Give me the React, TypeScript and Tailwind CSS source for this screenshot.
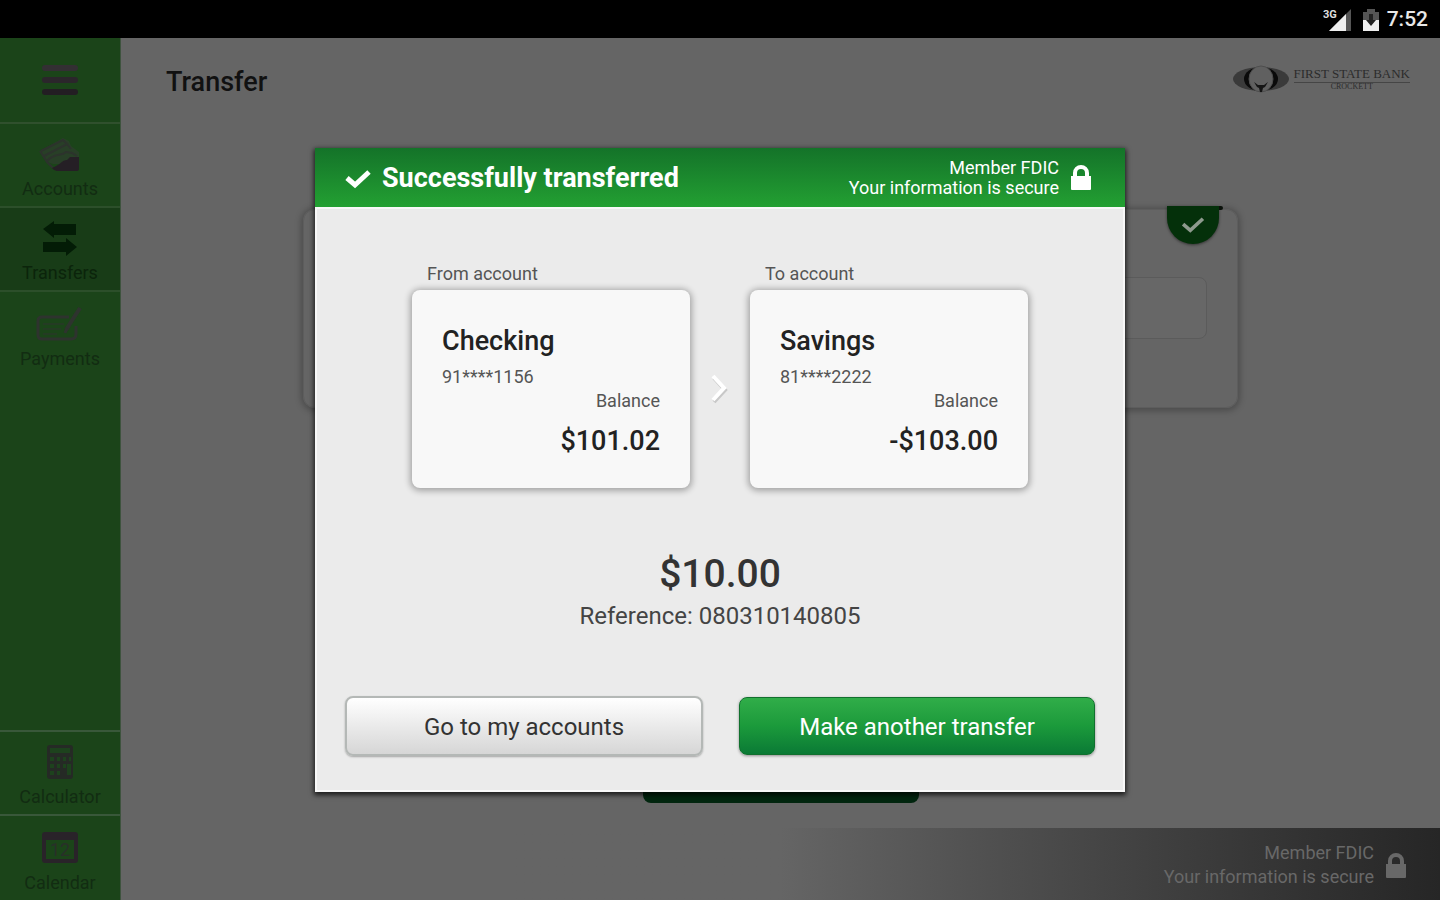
import React from "react";
import clsx from "clsx";

const LockIcon = ({ className }: { className?: string }) => (
  <svg viewBox="0 0 20 25" className={clsx("h-[25px] w-5", className)} fill="currentColor">
    <path d="M0 11h2V8a8 8 0 0 1 16 0v3h2v13a1 1 0 0 1-1 1H1a1 1 0 0 1-1-1zM6 11h8V8a4 4 0 0 0-8 0z" />
  </svg>
);

const AccountsIcon = () => (
  <svg viewBox="0 0 42 36" className="h-9 w-[42px]">
    <path d="M1 15 24 2l6 3 2 5 8 6v12H14Q6 27 1 15z" fill="#283f27" />
    <path d="M2 15 24 4l4 4M5 20l23-12 4 5M8 25c8-9 14-4 19-9l6 1 5 3M1 15l7 11 6 6" fill="none" stroke="#2c332c" strokeWidth="2" />
    <path d="M13 32c8-3 10-8 15-8l3-3h9v12q0 2-2 2H18q-3 0-5-3z" fill="#251f25" />
  </svg>
);

const TransfersIcon = () => (
  <svg viewBox="0 0 36 36" className="h-9 w-9" fill="#031c06">
    <path d="M1 9 12 1v3h22v11H12v3zM35 27 24 18v4H1v10h23v4z" />
  </svg>
);

const PaymentsIcon = () => (
  <svg viewBox="0 0 48 36" className="h-9 w-12" fill="none" stroke="#2e332e">
    <path d="M33 11H6q-4 0-4 4v14q0 4 4 4h29q5 0 5-5v-8" strokeWidth="3" />
    <path d="M7 18h21M7 23h18M7 28h14" strokeWidth="1" />
    <path d="m44 2-9 14-5 8" strokeWidth="4" />
    <path d="m31 22-2 5" strokeWidth="3" />
  </svg>
);

const CalculatorIcon = () => (
  <svg viewBox="0 0 28 36" className="h-9 w-7">
    <path d="M4 1h20q3 0 3 3v28q0 3-3 3H4q-3 0-3-3V4q0-3 3-3z" fill="#252a25" />
    <path d="M4 4h20v5H4zM4 13h4v4H4zM11 13h3v4h-3zM17 13h3v4h-3zM23 13h2v4h-2zM4 20h4v4H4zM11 20h3v4h-3zM17 20h3v4h-3zM4 27h4v4H4zM11 27h3v4h-3zM21 20h4v11h-4z" fill="#1d421d" />
  </svg>
);

const CalendarIcon = () => (
  <svg viewBox="0 0 38 32" className="h-8 w-[38px]">
    <path d="M4 0h30q3 0 3 3v25q0 3-3 3H4q-3 0-3-3V3q0-3 3-3zM5 8v19h28V8z" fill="#292329" fillRule="evenodd" />
    <text x="19" y="24" textAnchor="middle" fontSize="18" fill="#292f29">
      12
    </text>
  </svg>
);

const BankLogo = () => (
  <div className="flex items-center gap-1">
    <svg viewBox="0 0 58 28" className="h-7 w-[58px]">
      <ellipse cx="29" cy="14" rx="28" ry="12" fill="#3a3a3a" />
      <ellipse cx="29" cy="14" rx="17" ry="12" fill="#0a0a0a" />
      <ellipse cx="29" cy="14" rx="12" ry="13" fill="#606060" stroke="#4e4e4e" />
      <path d="m22 17 4 3h6l4-3-3 5-2 1-1 4h-2l-1-4-2-1z" fill="#151515" />
    </svg>
    <div className="flex flex-col items-center font-['Liberation_Serif',serif] text-[#2c2c2c]">
      <span className="border-b border-[#454545] text-[13px] leading-4 whitespace-nowrap">FIRST STATE BANK</span>
      <span className="text-[8px] leading-2">CROCKETT</span>
    </div>
  </div>
);

const topItems = [
  { label: "Accounts", icon: <AccountsIcon /> },
  { label: "Transfers", icon: <TransfersIcon />, active: true },
  { label: "Payments", icon: <PaymentsIcon /> },
];

const bottomItems = [
  { label: "Calculator", icon: <CalculatorIcon /> },
  { label: "Calendar", icon: <CalendarIcon /> },
];

const NavItem = ({ label, icon, active }: { label: string; icon: React.ReactNode; active?: boolean }) => (
  <a
    href="#"
    className={clsx(
      "flex h-[84px] flex-col items-center justify-end gap-[3px] pb-[5px] text-[18px] leading-6",
      active ? "bg-[#183c17] text-[#0b240b]" : "text-[#122c12]"
    )}
  >
    <span className="flex h-10 items-center">{icon}</span>
    {label}
  </a>
);

const Sidebar = () => (
  <nav className="flex w-[121px] shrink-0 flex-col border-r border-[#3e533e] bg-[#1b4419]">
    <button type="button" aria-label="Menu" className="flex h-[86px] flex-col items-center justify-center gap-[6px] border-b-2 border-[#30502d]">
      <span className="h-[6px] w-9 rounded-sm bg-[#332f33]" />
      <span className="h-[6px] w-9 rounded-sm bg-[#2b262b]" />
      <span className="h-[6px] w-9 rounded-sm bg-[#231e23]" />
    </button>
    <div className="divide-y-2 divide-[#2c4f2a]">
      {topItems.map((item) => (
        <NavItem key={item.label} {...item} />
      ))}
    </div>
    <div className="mt-auto divide-y-2 divide-[#39583a] border-t-2 border-[#39583a]">
      {bottomItems.map((item) => (
        <NavItem key={item.label} {...item} />
      ))}
    </div>
  </nav>
);

const SecureNote = ({ lineClass }: { lineClass: string }) => (
  <div className="flex items-center gap-3">
    <p className={clsx("text-right text-[18px]", lineClass)}>
      Member FDIC
      <br />
      Your information is secure
    </p>
    <LockIcon />
  </div>
);

const AccountCard = ({ title, name, number, balance }: { title: string; name: string; number: string; balance: string }) => (
  <section className="w-[278px]">
    <h3 className="pt-1 pl-[15px] text-[18px] leading-8 text-[#555]">{title}</h3>
    <div className="rounded-lg bg-[#f8f8f8] px-[30px] pt-[35px] pb-[31px] shadow-[0_1px_6px_2px_rgba(0,0,0,0.3)]">
      <p className="text-[27px] leading-8 font-medium text-[#222]">{name}</p>
      <p className="mt-2 text-[18px] leading-6 text-[#555]">{number}</p>
      <div className="text-right">
        <p className="text-[18px] leading-6 text-[#555]">Balance</p>
        <p className="mt-3 text-[27px] leading-8 font-medium text-[#222]">{balance}</p>
      </div>
    </div>
  </section>
);

const TransferDialog = () => (
  <div
    role="dialog"
    aria-labelledby="dialog-title"
    className="w-[810px] max-w-full bg-[#ebebeb] shadow-[0_2px_5px_1px_rgba(0,0,0,0.75)]"
  >
    <header className="flex h-[59px] items-center justify-between bg-linear-to-b from-[#147329] to-[#23a032] pr-[34px] pl-[30px] text-white">
      <h2 id="dialog-title" className="flex items-center gap-[11px] pt-0.5 text-[27px] font-bold">
        <svg viewBox="0 0 26 20" className="h-5 w-[26px]" fill="none" stroke="currentColor" strokeWidth="5">
          <path d="m2 9 8 7L24 3" />
        </svg>
        Successfully transferred
      </h2>
      <SecureNote lineClass="leading-5" />
    </header>

    <div className="border-2 border-[#f8f8f8] px-7 pt-[45px] pb-[34px]">
      <div className="flex items-center justify-center">
        <AccountCard title="From account" name="Checking" number="91****1156" balance="$101.02" />
        <svg viewBox="0 0 60 36" className="mt-9 h-9 w-[60px]" fill="none" strokeWidth="4">
          <path d="m24 7 11 12-11 12" stroke="#c8c8c8" />
          <path d="m23 5 11 12-11 12" stroke="#fff" />
        </svg>
        <AccountCard title="To account" name="Savings" number="81****2222" balance="-$103.00" />
      </div>

      <div className="mt-16 text-center">
        <p className="text-[39px] leading-11 font-medium text-[#333]">$10.00</p>
        <p className="mt-1 text-2xl leading-8 text-[#444]">Reference: 080310140805</p>
      </div>

      <div className="mt-16 flex gap-9 text-2xl">
        <button
          type="button"
          className="h-[60px] flex-1 rounded-lg border-2 border-[#b4b8b6] bg-linear-to-b from-white to-[#d6d6d6] pt-0.5 text-[#333] shadow-[0_1px_2px_rgba(0,0,0,0.3)]"
        >
          Go to my accounts
        </button>
        <button
          type="button"
          className="my-px h-[58px] flex-1 rounded-lg border border-[#11702e] bg-linear-to-b from-[#30ad49] via-[#1b9a3b] to-[#0a7a35] pt-0.5 text-white shadow-[0_1px_3px_rgba(0,0,0,0.4)]"
        >
          Make another transfer
        </button>
      </div>
    </div>
  </div>
);

const StatusBar = () => (
  <div className="flex h-[38px] items-center justify-end bg-black pt-0.5 pr-3 text-[#e8e8e8]">
    <svg viewBox="0 0 28 24" className="mr-3 h-6 w-7">
      <path d="M28 1v22H6z" fill="#555" />
      <path d="M23 6v17H6z" fill="#eee" />
      <text x="0" y="10" fontSize="11" fontWeight="700" fill="#ddd">
        3G
      </text>
    </svg>
    <svg viewBox="0 0 16 24" className="mr-2 h-6 w-4">
      <path d="M4 1h8v3h4v19H0V4h4z" fill="#555" />
      <path d="M0 12h16v11H0z" fill="#eee" />
      <path d="M6 6h4v6h3l-5 6-5-6h3z" fill="#222" />
    </svg>
    <span className="text-[21px] font-medium">7:52</span>
  </div>
);

export default function App() {
  return (
    <div className="flex min-h-screen flex-col bg-black font-[Roboto,'Liberation_Sans',sans-serif]">
      <StatusBar />
      <div className="relative flex flex-1">
        <Sidebar />

        <main className="flex flex-1 flex-col bg-[#656565]">
          <header className="flex h-[85px] items-center justify-between pr-[30px] pl-[45px]">
            <h1 className="pt-1 text-[27px] font-medium text-[#111]">Transfer</h1>
            <div className="pb-1">
              <BankLogo />
            </div>
          </header>

          {/* Transfer form behind the dialog */}
          <div className="relative mt-[86px] mr-[202px] ml-[182px] rounded-xl border border-[#5d5d5d] px-[30px] pt-[67px] pb-[68px] shadow-[0_1px_6px_2px_rgba(0,0,0,0.25)]">
            <input aria-label="Amount" className="block h-[62px] w-full rounded-lg border border-[#5b5b5b] bg-[#676767]" />
            <span className="absolute -top-1 right-[14px] h-1 w-8 rounded-sm bg-[#0b120b]" />
            <span className="absolute -top-1 right-[18px] flex h-[38px] w-[52px] items-center justify-center rounded-b-full bg-[#04300a] shadow-[0_1px_3px_rgba(0,0,0,0.5)]">
              <svg viewBox="0 0 26 20" className="h-[18px] w-[26px]" fill="none" stroke="#8e9a8e" strokeWidth="4">
                <path d="m2 9 8 7L24 3" />
              </svg>
            </span>
          </div>
          <button
            type="button"
            aria-label="Transfer"
            className="mt-auto mb-[25px] h-[58px] w-[276px] self-center rounded-lg bg-[#02260f]"
          />

          <footer className="flex h-[72px] items-center justify-end bg-linear-to-r from-[#656565] from-50% to-[#262626] pt-0.5 pr-[34px] text-[#686868]">
            <SecureNote lineClass="leading-6" />
          </footer>
        </main>

        <div className="absolute inset-0 flex items-center justify-center pt-0.5">
          <TransferDialog />
        </div>
      </div>
    </div>
  );
}
